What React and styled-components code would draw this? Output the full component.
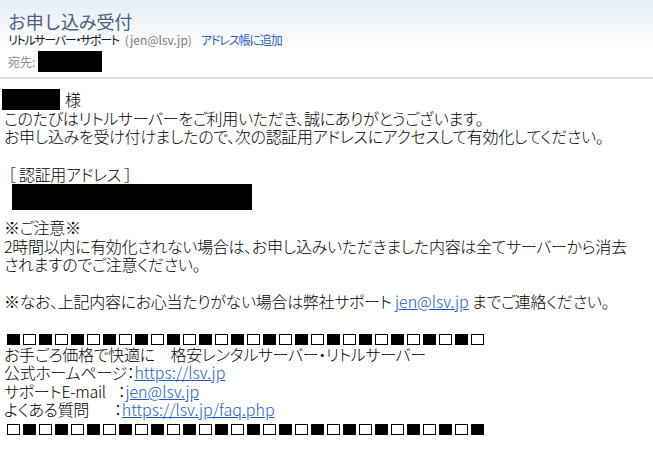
import React from 'react'
import styled, { createGlobalStyle } from 'styled-components'

const GlobalStyle = createGlobalStyle`
  html, body {
    margin: 0;
    padding: 0;
    background: #fff;
  }
  body {
    font-family: "Noto Sans CJK JP", "Noto Sans", sans-serif;
  }
`

const Page = styled.div`
  width: 653px;
  height: 462px;
  overflow: hidden;
  background: #fff;
`

const Header = styled.div`
  height: 79px;
  padding: 10px 0 0 8px;
  box-sizing: border-box;
  background: linear-gradient(to bottom, #e6eef8 0px, #f7f9fc 34px, #fff 52px);
  border-bottom: 2px solid #dcdcdc;
`

const Subject = styled.div`
  font-size: 18px;
  line-height: 22px;
  color: #4b5f7c;
  letter-spacing: -0.3px;
`

const Sender = styled.div`
  display: flex;
  align-items: center;
  font-size: 12px;
  line-height: 16px;
  color: #1a1a1a;
  font-feature-settings: "palt";
`

const SenderName = styled.span`
  letter-spacing: -1.3px;
  margin-right: 6px;
`

const Muted = styled.span`
  color: #7a7a7a;
`

const HeaderLink = styled.span`
  color: #2a62c2;
  margin-left: 9px;
  letter-spacing: -1.1px;
`

const Recipient = styled.div`
  display: flex;
  align-items: center;
  margin-top: 3px;
  font-size: 12px;
  color: #8a8a8a;
`

const Redacted = styled.span`
  display: inline-block;
  background: #000;
  width: ${p => p.w}px;
  height: ${p => p.h}px;
  margin-left: ${p => p.ml || 0}px;
`

const Body = styled.div`
  padding: 10px 0 0 2px;
  font-size: 16px;
  font-weight: 300;
  line-height: 18.5px;
  color: #000;
  font-feature-settings: "palt";
  letter-spacing: -0.3px;
`

const Greeting = styled.div`
  display: flex;
  align-items: center;
  height: 21px;
  gap: 5px;
`

const Block = styled.div`
  padding-left: ${p => p.indent || 2}px;
  margin-top: ${p => p.mt || 0}px;
  line-height: ${p => p.lh || 18.5}px;
  white-space: nowrap;
`

const Gap = styled.span`
  display: inline-block;
  width: ${p => p.w}px;
`

const Link = styled.a`
  color: #1560c8;
  text-decoration: underline;
  letter-spacing: 0;
`

const Spacer = styled.div`
  height: ${p => p.h}px;
`

const Squares = styled.div`
  display: flex;
  align-items: flex-start;
  gap: 3px;
  box-sizing: border-box;
  height: 18.5px;
  padding: ${p => p.pt}px 0 0 5px;
`

const Square = styled.span`
  display: inline-block;
  width: 13px;
  height: 11px;
  box-sizing: border-box;
  border: 1.5px solid #000;
  background: ${p => (p.filled ? '#000' : '#fff')};
`

const SquareRow = ({ startFilled, pt }) => (
  <Squares pt={pt}>
    {Array.from({ length: 30 }, (_, i) => (
      <Square key={i} filled={(i % 2 === 0) === startFilled} />
    ))}
  </Squares>
)

export default function App() {
  return (
    <Page>
      <GlobalStyle />
      <Header>
        <Subject>お申し込み受付</Subject>
        <Sender>
          <SenderName>リトルサーバー・サポート</SenderName>
          <Muted>(jen@lsv.jp)</Muted>
          <HeaderLink>アドレス帳に追加</HeaderLink>
        </Sender>
        <Recipient>
          宛先:
          <Redacted w={64} h={21} ml={3} />
        </Recipient>
      </Header>
      <Body>
        <Greeting>
          <Redacted w={58} h={21} />
          <span>様</span>
        </Greeting>
        <Block lh={17.5}>
          このたびはリトルサーバーをご利用いただき、誠にありがとうございます。
          <br />
          お申し込みを受け付けましたので、次の認証用アドレスにアクセスして有効化してください。
        </Block>
        <Block indent={6} mt={20}>［ 認証用アドレス ］</Block>
        <Redacted w={240} h={26} ml={10} />
        <Block mt={6}>
          ※ご注意※
          <br />
          2時間以内に有効化されない場合は、お申し込みいただきました内容は全てサーバーから消去
          <br />
          されますのでご注意ください。
        </Block>
        <Block mt={18}>
          ※なお、上記内容にお心当たりがない場合は弊社サポート <Link href="#">jen@lsv.jp</Link> までご連絡ください。
        </Block>
        <Spacer h={16} />
        <SquareRow startFilled pt={8} />
        <Block>お手ごろ価格で快適に　格安レンタルサーバー・リトルサーバー</Block>
        <Block>
          公式ホームページ：<Link href="#">https://lsv.jp</Link>
        </Block>
        <Block>
          サポートE-mail<Gap w={12} />：<Link href="#">jen@lsv.jp</Link>
        </Block>
        <Block>
          よくある質問<Gap w={25} />：<Link href="#">https://lsv.jp/faq.php</Link>
        </Block>
        <SquareRow startFilled={false} pt={5} />
      </Body>
    </Page>
  )
}
